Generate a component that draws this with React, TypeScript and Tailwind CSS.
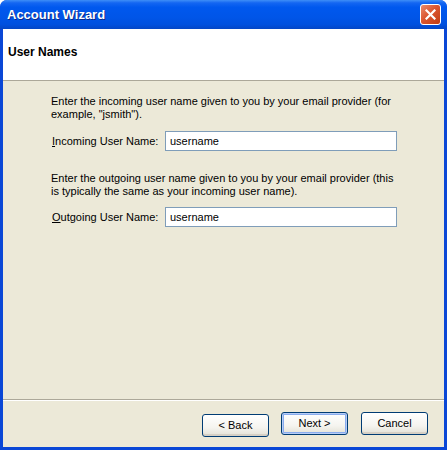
const font = { fontFamily: '"Liberation Sans", Arial, sans-serif' };

const XpButton = ({ label, isDefault = false }: { label: string; isDefault?: boolean }) => {
  return (
    <button
      className={
        "w-[67px] h-[23px] rounded-[3px] border border-[#003C74] text-[11px] text-black bg-[linear-gradient(to_bottom,#FFFFFF_0%,#F5F4EF_60%,#E3E1D6_100%)] " +
        (isDefault ? "shadow-[inset_0_0_0_1px_#B7CDF6,inset_0_0_0_2px_#89ACEE]" : "shadow-[inset_0_-2px_0_#D6D0C5]")
      }
    >
      {label}
    </button>
  );
};

const Field = ({ label, accessKey, value }: { label: string; accessKey: string; value: string }) => {
  return (
    <div className="flex items-center h-[20px]">
      <span className="w-[113px] text-[11px] text-black">
        <span className="underline">{accessKey}</span>
        {label}
      </span>
      <div className="flex-1 h-[20px] border border-[#7F9DB9] bg-white px-[4px] flex items-center text-[11px] text-black">
        {value}
      </div>
    </div>
  );
};

export default function App() {
  return (
    <div className="w-[447px] h-[450px] flex flex-col bg-[#0A47D6] rounded-t-[7px] overflow-hidden" style={font}>
      <div className="h-[29px] shrink-0 flex items-center justify-between pl-[7px] pr-[6px] bg-[linear-gradient(to_bottom,#3E8EF7_0%,#1466F2_10%,#0058EE_25%,#0055E8_60%,#0050DE_85%,#0446C5_100%)]">
        <span className="text-white font-bold text-[13px] [text-shadow:1px_1px_0_#0B2A8A] pt-[1px]">Account Wizard</span>
        <div className="w-[21px] h-[21px] rounded-[3px] border border-white flex items-center justify-center bg-[linear-gradient(135deg,#EA8B6D_0%,#DB5631_45%,#C23C12_100%)]">
          <svg width="11" height="11" viewBox="0 0 11 11">
            <path d="M1.5 1.5 L9.5 9.5 M9.5 1.5 L1.5 9.5" stroke="#fff" strokeWidth="2.2" strokeLinecap="square" />
          </svg>
        </div>
      </div>

      <div className="flex-1 flex flex-col mx-[3px] mb-[3px] bg-[#ECE9D8]">
        <div className="h-[52px] shrink-0 bg-white pl-[5px] pt-[10px] border-b border-[#ACA899]">
          <span className="font-bold text-[12px] text-black">User Names</span>
        </div>

        <div className="flex-1 pl-[48px] pr-[47px] pt-[14px] text-[11px] text-black">
          <p className="leading-[13px]">
            Enter the incoming user name given to you by your email provider (for
            <br />
            example, "jsmith").
          </p>
          <div className="mt-[10px] pl-[1px]">
            <Field accessKey="I" label="ncoming User Name:" value="username" />
          </div>
          <p className="leading-[13px] mt-[21px]">
            Enter the outgoing user name given to you by your email provider (this
            <br />
            is typically the same as your incoming user name).
          </p>
          <div className="mt-[9px] pl-[1px]">
            <Field accessKey="O" label="utgoing User Name:" value="username" />
          </div>
        </div>

        <div className="h-[2px] shrink-0 border-t border-[#ACA899] border-b border-b-white" />

        <div className="h-[46px] shrink-0 flex items-start justify-end gap-[13px] pt-[11px] pr-[16px]">
          <div className="-mr-[1px]">
            <XpButton label="< Back" />
          </div>
          <XpButton label="Next >" isDefault />
          <XpButton label="Cancel" />
        </div>
      </div>
    </div>
  );
}
